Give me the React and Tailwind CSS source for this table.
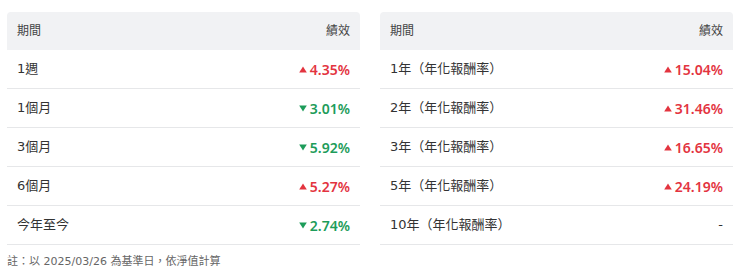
import React from 'react';

const left = [
  { label: '1週', value: '4.35%', up: true },
  { label: '1個月', value: '3.01%', up: false },
  { label: '3個月', value: '5.92%', up: false },
  { label: '6個月', value: '5.27%', up: true },
  { label: '今年至今', value: '2.74%', up: false },
];

const right = [
  { label: '1年（年化報酬率）', value: '15.04%', up: true },
  { label: '2年（年化報酬率）', value: '31.46%', up: true },
  { label: '3年（年化報酬率）', value: '16.65%', up: true },
  { label: '5年（年化報酬率）', value: '24.19%', up: true },
  { label: '10年（年化報酬率）', value: null },
];

function Arrow({ up }) {
  return (
    <svg width="8" height="7" viewBox="0 0 8 7" className="mr-[3px]">
      {up ? <path d="M4 0.5 L7.8 6.5 L0.2 6.5 Z" fill="currentColor" /> : <path d="M0.2 0.5 L7.8 0.5 L4 6.5 Z" fill="currentColor" />}
    </svg>
  );
}

function Table({ rows }) {
  return (
    <div className="flex-1">
      <div className="flex items-center justify-between h-[38px] px-[10px] bg-[#f1f2f4] rounded-t-[4px] text-[12px] text-[#444]">
        <span>期間</span>
        <span>績效</span>
      </div>
      {rows.map((r) => (
        <div key={r.label} className="flex items-center justify-between h-[39px] px-[10px] border-b border-[#e6e7e9]">
          <span className="text-[13px] text-[#333]">{r.label}</span>
          {r.value ? (
            <span className={`flex items-center text-[14px] font-semibold font-['Noto_Sans'] ${r.up ? 'text-[#e3343f]' : 'text-[#1d9c5a]'}`}>
              <Arrow up={r.up} />
              {r.value}
            </span>
          ) : (
            <span className="text-[13px] text-[#333]">-</span>
          )}
        </div>
      ))}
    </div>
  );
}

export default function App() {
  return (
    <div className="w-[740px] h-[280px] bg-white px-[7px] pt-[12px]" style={{ fontFamily: '"DejaVu Sans", "Noto Sans CJK TC", sans-serif' }}>
      <div className="flex gap-[20px]">
        <Table rows={left} />
        <Table rows={right} />
      </div>
      <p className="mt-[9px] text-[11px] text-[#666]">註：以 2025/03/26 為基準日，依淨值計算</p>
    </div>
  );
}
